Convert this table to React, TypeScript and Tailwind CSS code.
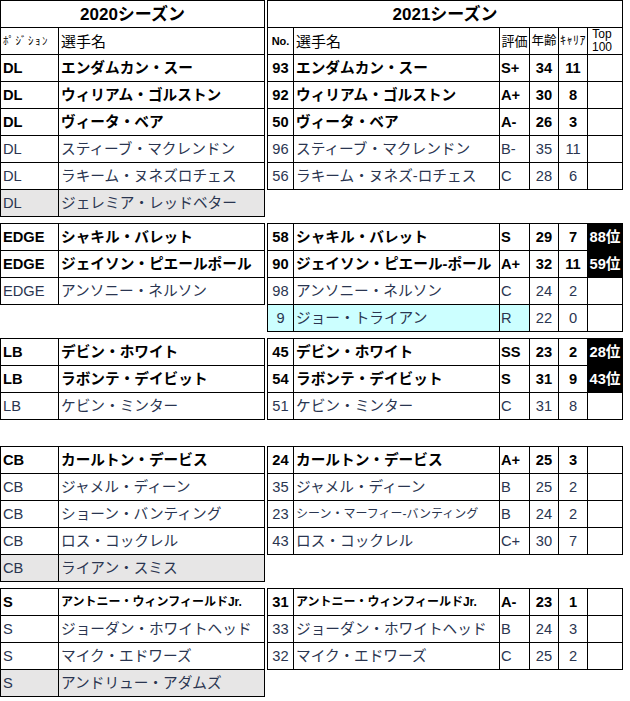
import React from "react";

type L = { pos: string; name: string; bold?: boolean; gray?: boolean; small?: boolean };
type R = {
  no: string;
  name: string;
  grade: string;
  age: string;
  car: string;
  rank?: string;
  bold?: boolean;
  blue?: boolean;
  small?: boolean;
};

const FONT = "font-['Liberation_Sans','Noto_Sans_CJK_JP',sans-serif]";

function LeftRow({ r }: { r: L }) {
  return (
    <div
      className={`flex h-[27px] border-b border-black ${r.gray ? "bg-[#e7e6e6]" : ""} ${
        r.bold ? "font-bold text-black" : "text-[#2a3550]"
      }`}
    >
      <div className="w-[58px] shrink-0 border-r border-black flex items-center pl-[2px] text-[14.67px] leading-none">
        {r.pos}
      </div>
      <div
        className={`w-[206px] shrink-0 border-r border-black flex items-center pl-[2px] whitespace-nowrap leading-none ${
          r.small ? "text-[12px]" : "text-[14.67px]"
        }`}
      >
        {r.name}
      </div>
    </div>
  );
}

function RightRow({ r }: { r: R }) {
  return (
    <div
      className={`flex h-[27px] border-b border-black ${r.bold ? "font-bold text-black" : "text-[#2a3550]"}`}
    >
      <div
        className={`w-[26px] shrink-0 border-r border-black flex items-center justify-center text-[14.67px] leading-none ${
          r.blue ? "bg-[#ccffff]" : ""
        }`}
      >
        {r.no}
      </div>
      <div
        className={`w-[206px] shrink-0 border-r border-black flex items-center pl-[2px] whitespace-nowrap leading-none ${
          r.small ? "text-[12px]" : "text-[14.67px]"
        } ${r.blue ? "bg-[#ccffff]" : ""}`}
      >
        {r.name}
      </div>
      <div
        className={`w-[30px] shrink-0 border-r border-black flex items-center pl-[1px] text-[14.67px] leading-none ${
          r.blue ? "bg-[#ccffff]" : ""
        }`}
      >
        {r.grade}
      </div>
      <div className="w-[29px] shrink-0 border-r border-black flex items-center justify-center text-[14.67px] leading-none">
        {r.age}
      </div>
      <div className="w-[29px] shrink-0 border-r border-black flex items-center justify-center text-[14.67px] leading-none">
        {r.car}
      </div>
      <div
        className={`w-[35px] shrink-0 border-r border-black flex items-center justify-center text-[14.67px] leading-none ${
          r.rank ? "bg-black text-white font-bold" : ""
        }`}
      >
        {r.rank ?? ""}
      </div>
    </div>
  );
}

const Blank = () => <div className="h-[27px]" />;

function LeftGroup({ rows, header }: { rows: L[]; header?: boolean }) {
  return (
    <div className="border-t border-l border-black">
      {header && (
        <>
          <div className="flex h-[27px] border-b border-black">
            <div className="w-[264px] shrink-0 border-r border-black flex items-center justify-center font-bold text-[17px] leading-none text-black">
              2020シーズン
            </div>
          </div>
          <div className="flex h-[27px] border-b border-black text-black">
            <div className="w-[58px] shrink-0 border-r border-black flex items-center pl-[2px] text-[11px] tracking-[1.5px] leading-none whitespace-nowrap">
              ﾎﾟｼﾞｼｮﾝ
            </div>
            <div className="w-[206px] shrink-0 border-r border-black flex items-center pl-[2px] text-[15px] leading-none">
              選手名
            </div>
          </div>
        </>
      )}
      {rows.map((r, i) => (
        <LeftRow key={i} r={r} />
      ))}
    </div>
  );
}

function RightGroup({ rows, header }: { rows: R[]; header?: boolean }) {
  return (
    <div className="border-t border-l border-black">
      {header && (
        <>
          <div className="flex h-[27px] border-b border-black">
            <div className="w-[355px] shrink-0 border-r border-black flex items-center justify-center font-bold text-[17px] leading-none text-black">
              2021シーズン
            </div>
          </div>
          <div className="flex h-[27px] border-b border-black text-black">
            <div className="w-[26px] shrink-0 border-r border-black flex items-center justify-center text-[11px] font-bold leading-none">
              No.
            </div>
            <div className="w-[206px] shrink-0 border-r border-black flex items-center pl-[2px] text-[15px] leading-none">
              選手名
            </div>
            <div className="w-[30px] shrink-0 border-r border-black flex items-center justify-center text-[13px] leading-none whitespace-nowrap">
              評価
            </div>
            <div className="w-[29px] shrink-0 border-r border-black flex items-center justify-center text-[12.5px] leading-none whitespace-nowrap">
              年齢
            </div>
            <div className="w-[29px] shrink-0 border-r border-black flex items-center justify-center text-[12px] tracking-[0.5px] leading-none whitespace-nowrap">
              ｷｬﾘｱ
            </div>
            <div className="w-[35px] shrink-0 border-r border-black flex flex-col items-center justify-center pr-[6px] text-[12px] leading-[13px]">
              <span>Top</span>
              <span>100</span>
            </div>
          </div>
        </>
      )}
      {rows.map((r, i) => (
        <RightRow key={i} r={r} />
      ))}
    </div>
  );
}

const dlL: L[] = [
  { pos: "DL", name: "エンダムカン・スー", bold: true },
  { pos: "DL", name: "ウィリアム・ゴルストン", bold: true },
  { pos: "DL", name: "ヴィータ・ベア", bold: true },
  { pos: "DL", name: "スティーブ・マクレンドン" },
  { pos: "DL", name: "ラキーム・ヌネズロチェス" },
  { pos: "DL", name: "ジェレミア・レッドベター", gray: true },
];
const dlR: R[] = [
  { no: "93", name: "エンダムカン・スー", grade: "S+", age: "34", car: "11", bold: true },
  { no: "92", name: "ウィリアム・ゴルストン", grade: "A+", age: "30", car: "8", bold: true },
  { no: "50", name: "ヴィータ・ベア", grade: "A-", age: "26", car: "3", bold: true },
  { no: "96", name: "スティーブ・マクレンドン", grade: "B-", age: "35", car: "11" },
  { no: "56", name: "ラキーム・ヌネズ-ロチェス", grade: "C", age: "28", car: "6" },
];
const edgeL: L[] = [
  { pos: "EDGE", name: "シャキル・バレット", bold: true },
  { pos: "EDGE", name: "ジェイソン・ピエールポール", bold: true },
  { pos: "EDGE", name: "アンソニー・ネルソン" },
];
const edgeR: R[] = [
  { no: "58", name: "シャキル・バレット", grade: "S", age: "29", car: "7", rank: "88位", bold: true },
  { no: "90", name: "ジェイソン・ピエール-ポール", grade: "A+", age: "32", car: "11", rank: "59位", bold: true },
  { no: "98", name: "アンソニー・ネルソン", grade: "C", age: "24", car: "2" },
  { no: "9", name: "ジョー・トライアン", grade: "R", age: "22", car: "0", blue: true },
];
const lbL: L[] = [
  { pos: "LB", name: "デビン・ホワイト", bold: true },
  { pos: "LB", name: "ラボンテ・デイビット", bold: true },
  { pos: "LB", name: "ケビン・ミンター" },
];
const lbR: R[] = [
  { no: "45", name: "デビン・ホワイト", grade: "SS", age: "23", car: "2", rank: "28位", bold: true },
  { no: "54", name: "ラボンテ・デイビット", grade: "S", age: "31", car: "9", rank: "43位", bold: true },
  { no: "51", name: "ケビン・ミンター", grade: "C", age: "31", car: "8" },
];
const cbL: L[] = [
  { pos: "CB", name: "カールトン・デービス", bold: true },
  { pos: "CB", name: "ジャメル・ディーン" },
  { pos: "CB", name: "ショーン・バンティング" },
  { pos: "CB", name: "ロス・コックレル" },
  { pos: "CB", name: "ライアン・スミス", gray: true },
];
const cbR: R[] = [
  { no: "24", name: "カールトン・デービス", grade: "A+", age: "25", car: "3", bold: true },
  { no: "35", name: "ジャメル・ディーン", grade: "B", age: "25", car: "2" },
  { no: "23", name: "シーン・マーフィー-バンティング", grade: "B", age: "24", car: "2", small: true },
  { no: "43", name: "ロス・コックレル", grade: "C+", age: "30", car: "7" },
];
const sL: L[] = [
  { pos: "S", name: "アントニー・ウィンフィールドJr.", bold: true, small: true },
  { pos: "S", name: "ジョーダン・ホワイトヘッド" },
  { pos: "S", name: "マイク・エドワーズ" },
  { pos: "S", name: "アンドリュー・アダムズ", gray: true },
];
const sR: R[] = [
  { no: "31", name: "アントニー・ウィンフィールドJr.", grade: "A-", age: "23", car: "1", bold: true, small: true },
  { no: "33", name: "ジョーダン・ホワイトヘッド", grade: "B", age: "24", car: "3" },
  { no: "32", name: "マイク・エドワーズ", grade: "C", age: "25", car: "2" },
];

export default function App() {
  return (
    <div className={`w-[630px] h-[701px] bg-white flex items-start ${FONT}`}>
      <div className="w-[265px] shrink-0 flex flex-col">
        <LeftGroup rows={dlL} header />
        <div className="h-[6px]" />
        <LeftGroup rows={edgeL} />
        <Blank />
        <div className="h-[6px]" />
        <LeftGroup rows={lbL} />
        <div className="h-[26px]" />
        <LeftGroup rows={cbL} />
        <div className="h-[6px]" />
        <LeftGroup rows={sL} />
      </div>
      <div className="w-[356px] shrink-0 ml-[2px] flex flex-col">
        <RightGroup rows={dlR} header />
        <Blank />
        <div className="h-[6px]" />
        <RightGroup rows={edgeR} />
        <div className="h-[6px]" />
        <RightGroup rows={lbR} />
        <div className="h-[26px]" />
        <RightGroup rows={cbR} />
        <Blank />
        <div className="h-[6px]" />
        <RightGroup rows={sR} />
      </div>
    </div>
  );
}
